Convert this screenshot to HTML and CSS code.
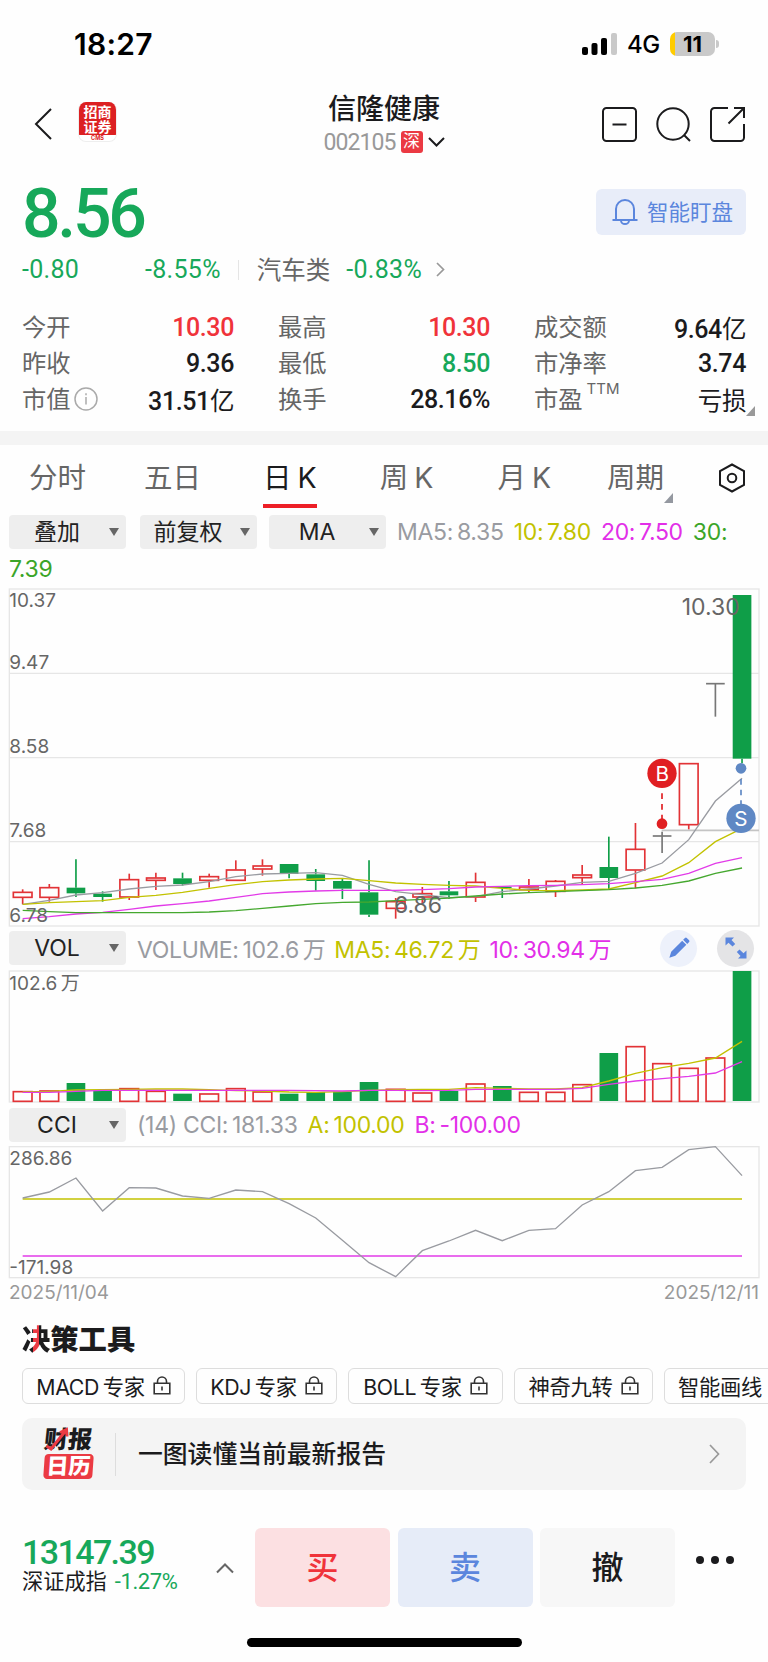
FILE: index.html
```html
<!doctype html>
<html lang="zh-CN">
<head>
  <meta charset="UTF-8">
  <title>信隆健康 002105</title>
  <link rel="stylesheet" href="styles.css">
</head>
<body>
  <div class="status">
    <span class="time">18:27</span>
    <svg class="signal" width="36" height="24" viewBox="0 0 36 24">
      <rect x="0" y="15" width="6" height="8" rx="2"/>
      <rect x="9.5" y="11" width="6" height="12" rx="2"/>
      <rect x="19" y="6" width="6" height="17" rx="2"/>
      <rect x="29" y="1" width="6" height="22" rx="2" fill="#c9c9c9"/>
    </svg>
    <span class="net">4G</span>
    <span class="battery">11</span>
    <span class="nub"></span>
  </div>

  <div class="header">
    <svg class="back" width="20" height="34" viewBox="0 0 20 34"><path d="M17 2 2 17l15 15"/></svg>
    <div class="cms"><b>招商<br>证券</b><i>CMS</i></div>
    <div class="name">
      <h1>信隆健康</h1>
      <p><span class="code">002105</span><em>深</em><svg width="17" height="10" viewBox="0 0 17 10"><path d="M1 1l7.500 7.500L16 1"/></svg></p>
    </div>
    <div class="tools">
      <svg width="36" height="36" viewBox="0 0 36 36"><rect x="1" y="1" width="33" height="33" rx="3.500"/><path d="M10.500 17.500h14"/></svg>
      <svg width="36" height="36" viewBox="0 0 36 36"><circle cx="17" cy="17" r="15.700"/><path d="M28 28l6 6"/></svg>
      <svg width="36" height="36" viewBox="0 0 36 36"><path d="M18 1H4.500A3.500 3.500 0 0 0 1 4.500v26A3.500 3.500 0 0 0 4.500 34h26a3.500 3.500 0 0 0 3.500-3.500V17M24 1h10v10M34 1 18.500 16.500"/></svg>
    </div>
  </div>

  <div class="price">
    <strong>8.56</strong>
    <a class="watch"><svg width="26" height="28" viewBox="0 0 26 28"><path d="M4 22V11a9 9 0 0 1 18 0v11M0.500 22h25M9 22.500a4 3.600 0 0 0 8 0"/></svg><span>智能盯盘</span></a>
  </div>
  <div class="change">
    <span class="c1">-0.80</span><span class="c2">-8.55%</span><i></i><span class="trade">汽车类</span><span>-0.83%</span>
    <svg width="9" height="15" viewBox="0 0 9 15"><path d="M1 1l6.500 6.500L1 14"/></svg>
  </div>
  <div class="quote">
    <div><label>今开</label><b class="red">10.30</b></div>
    <div><label>最高</label><b class="red">10.30</b></div>
    <div><label>成交额</label><b>9.64<u>亿</u></b></div>
    <div><label>昨收</label><b>9.36</b></div>
    <div><label>最低</label><b class="green">8.50</b></div>
    <div><label>市净率</label><b>3.74</b></div>
    <div><label>市值<svg width="24" height="24" viewBox="0 0 24 24"><circle cx="12" cy="12" r="11"/><path d="M12 10v7.500M12 6.200v2"/></svg></label><b>31.51<u>亿</u></b></div>
    <div><label>换手</label><b>28.16%</b></div>
    <div class="more"><label>市盈<sup>TTM</sup></label><b><u>亏损</u></b></div>
  </div>

  <div class="bar"></div>

  <div class="tabs">
    <span>分时</span><span>五日</span><span class="on">日<s>K</s></span><span>周<s>K</s></span><span>月<s>K</s></span><span class="cycle">周期</span>
    <svg width="30" height="30" viewBox="0 0 30 30"><path d="M15 1.500l12 6.500v14l-12 6.500L3 22V8z"/><circle cx="15" cy="15" r="4.300"/></svg>
  </div>

  <div class="legend">
    <span class="chip">叠加</span><span class="chip c-adj">前复权</span><span class="chip c-ma">MA</span>
    <span class="ma"><span class="gray">MA5:&thinsp;8.35</span><span class="yellow">10:&thinsp;7.80</span><span class="pink">20:&thinsp;7.50</span><span class="grn">30:</span></span>
  </div>
  <div class="legend2">7.39</div>

  <svg id="kline" class="chart" width="768" height="350" viewBox="0 0 2304 1050"></svg>

  <div class="legend vol">
    <span class="chip">VOL</span>
    <span class="ma"><span class="gray">VOLUME:&thinsp;102.6&thinsp;万</span><span class="yellow">MA5:&thinsp;46.72&thinsp;万</span><span class="pink">10:&thinsp;30.94&thinsp;万</span></span>
    <span class="round"><svg width="22" height="22" viewBox="0 0 24 24"><path d="M1.500 22.500l2-6.500L15.500 4l4.500 4.500L8 20.500zM16.500 3l2-2a1.500 1.500 0 0 1 2 0l2.500 2.500a1.500 1.500 0 0 1 0 2l-2 2z"/></svg></span>
    <span class="round dark"><svg width="22" height="22" viewBox="0 0 22 22"><path d="M0.500 0.500h8.500L6.500 3l3.700 3.900-2.700 2.600L3.500 5.800 0.500 8.500zM21.500 21.500H13l2.500-2.500-3.700-3.900 2.700-2.600 4 3.700 3-2.700z"/></svg></span>
  </div>

  <svg id="volume" class="chart" width="768" height="141" viewBox="0 138 2304 423"></svg>

  <div class="legend cci">
    <span class="chip">CCI</span>
    <span class="ma"><span class="gray">(14) CCI:&thinsp;181.33</span><span class="yellow">A:&thinsp;100.00</span><span class="pink">B:&thinsp;-100.00</span></span>
  </div>

  <svg id="cci" class="chart" width="768" height="139" viewBox="0 36 2304 417"></svg>
  <div class="dates"><span>2025/11/04</span><span>2025/12/11</span></div>

  <h2><span class="jue">决</span>策工具</h2>
  <div class="experts">
    <a>MACD&thinsp;专家<svg><use href="#lock"/></svg></a>
    <a>KDJ&thinsp;专家<svg><use href="#lock"/></svg></a>
    <a>BOLL&thinsp;专家<svg><use href="#lock"/></svg></a>
    <a>神奇九转<svg><use href="#lock"/></svg></a>
    <a>智能画线<svg><use href="#lock"/></svg></a>
  </div>

  <div class="report">
    <div class="cal">
      <b>财报</b><i>日历</i>
      <svg width="26" height="26" viewBox="0 0 26 26"><path d="M1.500 19l4.500 3L20.500 4M15 5.500l6.500-3 .5 7"/></svg>
    </div>
    <p>一图读懂当前最新报告</p>
    <svg class="go" width="11" height="20" viewBox="0 0 11 20"><path d="M1 1l8.500 9L1 19"/></svg>
  </div>

  <div class="footer">
    <div class="index">
      <strong>13147.39</strong>
      <p>深证成指<span>-1.27%</span></p>
    </div>
    <svg class="up" width="18" height="11" viewBox="0 0 18 11"><path d="M1 9.500L9 1.500l8 8"/></svg>
    <a class="buy">买</a><a class="sell">卖</a><a class="cancel">撤</a>
    <div class="dots"><i></i><i></i><i></i></div>
  </div>
  <div class="home"></div>

  <svg class="defs"><symbol id="lock" viewBox="0 0 18 19"><path d="M1.200 7.200h15.600v10.600H1.200zM4.500 7V5.500a4.500 4.500 0 0 1 9 0V7M9 10.500v4"/></symbol></svg>
  <script src="chart.js"></script>
</body>
</html>
```
FILE: styles.css
```css
*{margin:0;
  padding:0;
  box-sizing:border-box;}
body{width:768px;
     height:1662px;
     overflow:hidden;
     background:#fefefe;
     color:#1b1b1d;
     font-family:Inter,"Noto Sans CJK SC",sans-serif;}
i,em{font-style:normal;}
u,s{text-decoration:none;}
svg{display:block;
    flex:none;
    fill:none;
    stroke:#1b1b1d;
    stroke-width:2;}

/* 状态栏 */
.status{display:flex;
        align-items:center;
        height:80px;
        padding:8px 49px 0 74px;}
.time{flex:1;
      font-size:30px;
      font-weight:600;
      letter-spacing:.3px;
      color:#000;}
.signal{fill:#000; stroke:none;}
.net{margin:0 10px 0 9px;
     font-size:24px;
     font-weight:500;
     letter-spacing:-.3px;
     color:#000;}
.battery{width:45px;
         height:24px;
         border-radius:7px;
         background:linear-gradient(90deg,#fc0 5px,#c9c9c9 5px);
         color:#000;
         font-size:22px;
         font-weight:700;
         line-height:24px;
         text-align:center;}
.nub{width:3px;
     height:8px;
     margin-left:1px;
     border-radius:0 3px 3px 0;
     background:#c9c9c9;}

/* 标题 */
.header{display:flex;
        position:relative;
        height:88px;
        padding:22px 22px 0 34px;}
.back{margin-top:5px;}
.cms{width:39px;
     height:40px;
     margin-left:24px;
     border:1px solid #eee;
     border-top:0;
     border-radius:8px;
     overflow:hidden;
     background:#fff;
     text-align:center;}
.cms b{display:block;
       height:33px;
       margin:0 -1px;
       padding-top:2px;
       background:#dc2022;
       color:#fff;
       font-size:14px;
       line-height:15px;}
.cms i{display:block;
       color:#dc2022;
       font-size:5.500px;
       font-weight:700;
       line-height:6px;}
.name{flex:1;
      margin-left:49px;
      margin-top:-10px;
      text-align:center;}
.name h1{font-size:28px;
         font-weight:500;
         line-height:34px;}
.name p{display:flex;
        justify-content:center;
        align-items:center;
        height:28px;
        margin-top:2px;}
.code{color:#999;
      font:23px Roboto,sans-serif;
      letter-spacing:-.9px;}
.name em{width:22px;
         height:22px;
         margin:0 5px;
         border-radius:3px;
         background:#eb3a43;
         color:#fff;
         font-size:17px;
         line-height:21px;}
.tools{display:flex;
       gap:18px;
       margin-top:4.500px;}

/* 现价 */
.price{display:flex;
       justify-content:space-between;
       height:77px;
       padding:21px 22px 0 22px;}
.price strong{color:#17a85a;
              font:500 68px/50px Roboto,sans-serif;
              letter-spacing:-3.300px;}
.watch{display:flex;
       align-items:center;
       width:150px;
       height:46px;
       padding-left:16px;
       gap:9px;
       border-radius:6px;
       background:#e8edf9;
       color:#5b86dd;
       font-size:21.500px;
       white-space:nowrap;}
.watch span{padding-bottom:3px;}
.watch svg{stroke:#5b86dd;}
.change{display:flex;
        align-items:center;
        height:49px;
        padding-left:22px;
        color:#17a85a;
        font:25px Roboto,"Noto Sans CJK SC",sans-serif;
        letter-spacing:.3px;}
.c1{width:123px;}
.change i{width:1px;
          height:20px;
          margin:0 18px 0 17px;
          background:#e5e5e5;}
.change .trade{margin:-3px 16px 0 0;
               color:#666;
               font-size:24.500px;
               letter-spacing:0;}
.change svg{margin-left:14px;
            stroke:#999;
            stroke-width:1.700;}
.quote{display:grid;
       grid-template-columns:repeat(3,211px);
       grid-auto-rows:36px;
       column-gap:45px;
       height:137px;
       padding:15px 22px 0 23px;}
.quote div{display:flex;
           justify-content:space-between;
           align-items:center;}
.quote label{display:flex;
             align-items:center;
             margin:-3px 0 0 -1px;
             color:#666;
             font-size:24.300px;}
.quote label svg{margin:3px 0 0 3px;
                 stroke:#aaa;
                 stroke-width:1.500;}
.quote b{font:500 25px Roboto,"Noto Sans CJK SC",sans-serif;
         letter-spacing:-.4px;}
.quote u{font-weight:400;
         font-size:24.500px;}
.quote .red{color:#f0333a;}
.quote .green{color:#17a85a;}
.quote sup{margin:-18px 0 0 4px;
           font-size:15px;}
.more{position:relative;}
.more:after,.cycle:after{content:"";
                         position:absolute;
                         right:-9px;
                         bottom:1px;
                         border-bottom:10px solid #999;
                         border-left:9px solid transparent;}

.bar{height:14px;
     background:#f4f4f4;}

/* 周期切换 */
.tabs{display:flex;
      height:70px;
      padding-left:29px;
      color:#666;
      font-size:28.500px;
      line-height:65px;
      white-space:nowrap;}
.tabs span{flex:none;
           height:63px;
           margin-right:58px;}
.tabs s{margin-left:6px;}
.tabs .on{margin:0 63px 0 4px;
          border-bottom:4px solid #ed1f26;
          color:#1b1b1d;}
.tabs .on + span{margin-right:64px;}
.tabs .on + span + span{margin-right:56px;}
.tabs .cycle{position:relative;
             margin-right:53px;}
.cycle:after{bottom:5px;
             border-bottom-color:#9498a0;}
.tabs svg{margin-top:18px;}

/* 指标行 */
.legend{display:flex;
        align-items:center;
        height:34px;
        padding-left:9px;
        white-space:nowrap;}
.chip{position:relative;
      flex:none;
      width:117px;
      height:34px;
      padding-right:21px;
      border-radius:4px;
      background:#eee;
      color:#222;
      font-size:23px;
      line-height:34px;
      text-align:center;}
.chip:after{content:"";
            position:absolute;
            right:7px;
            top:13px;
            border:5px solid transparent;
            border-top:8px solid #666;
            border-bottom:0;}
.c-adj{margin:0 12px 0 14px;}
.ma{display:flex;
    flex:1;
    gap:10px;
    margin-left:11px;
    font-size:23px;
    letter-spacing:-.3px;}
.gray{color:#999ba1;}
.yellow{color:#c2c200;}
.pink{color:#e22fe8;}
.grn{color:#3ba528;}
.legend2{height:31px;
         padding-left:9px;
         color:#3ba528;
         font-size:23px;
         line-height:40px;
         letter-spacing:-.3px;}
.vol{height:36px;
     padding-right:14px;}
.vol .ma{gap:9px;
         letter-spacing:-.35px;}
.cci{height:35px;}
.round{display:flex;
       justify-content:center;
       align-items:center;
       width:37px;
       height:37px;
       margin-left:20px;
       border-radius:50%;
       background:#edf1fb;}
.round svg{fill:#5b86dd; stroke:none;}
.dark{background:#e4e4e6;}
.chart text{stroke:none;
            fill:#666;
            font-size:57px;}
.chart .big{font-size:69px;}
.chart .mark{fill:#fff;
             font-size:62px;
             text-anchor:middle;}
.dates{display:flex;
       justify-content:space-between;
       height:41px;
       padding:0 9px;
       color:#999;
       font-size:19px;
       line-height:24px;}

/* 决策工具 */
h2{height:46px;
   padding-left:22px;
   font-size:28.300px;
   font-weight:900;
   line-height:37px;}
.jue{background:linear-gradient(90deg,#1b1b1d 11px,#eb3a43 11px,#eb3a43 17px,#1b1b1d 17px);
     -webkit-background-clip:text;
     background-clip:text;
     color:transparent;}
.experts{display:flex;
         gap:11px;
         height:50px;
         padding-left:22px;
         overflow:hidden;}
.experts a{display:flex;
           flex:none;
           align-items:center;
           justify-content:center;
           gap:8px;
           width:163px;
           height:36px;
           padding-bottom:2px;
           border:1.500px solid #ddd;
           border-radius:6px;
           font-size:21.300px;
           letter-spacing:-.3px;
           white-space:nowrap;}
.experts a:nth-child(2){width:141px;}
.experts a:nth-child(3){width:155px;}
.experts a:nth-child(4){width:139px;}
.experts a:nth-child(5){justify-content:flex-start; padding-left:13px;}
.experts svg{width:18px;
             height:19px;
             stroke:#333;
             stroke-width:1.600;}
.report{display:flex;
        align-items:center;
        height:72px;
        margin:0 22px;
        padding:0 26px 0 22px;
        border-radius:10px;
        background:#f4f4f4;}
.cal{position:relative;
     width:49px;
     height:50px;}
.cal b{display:block;
       height:25px;
       font-size:24px;
       font-weight:900;
       line-height:22px;
       transform:skewX(-6deg);}
.cal i{display:block;
       height:25px;
       border-radius:4px;
       background:#eb3a43;
       color:#fff;
       font-size:22px;
       font-weight:900;
       line-height:24px;
       text-align:center;
       transform:skewX(-4deg);}
.cal svg{position:absolute;
         left:1px;
         top:-2px;
         stroke:#eb3a43;
         stroke-width:3;}
.report p{flex:1;
          height:43px;
          margin-left:22px;
          padding-left:22px;
          border-left:1px solid #ddd;
          font-size:24.800px;
          font-weight:500;
          line-height:42px;}
.go{stroke:#999;
    stroke-width:1.700;}

/* 底部 */
.footer{display:flex;
        height:110px;
        padding:0 22px;
        margin-top:38px;}
.index{width:194px;
       padding-top:9px;}
.index strong{display:block;
              height:31px;
              color:#17a85a;
              font:500 34px/30px Roboto,sans-serif;
              letter-spacing:-1.600px;}
.index p{font-size:21.200px;
         line-height:26px;
         white-space:nowrap;}
.index span{margin-left:8px;
            color:#17a85a;
            font:22px Roboto,sans-serif;
            letter-spacing:-.4px;}
.up{margin:35px 21px 0 0;
    stroke:#666;}
.footer a{width:135px;
          height:79px;
          margin-right:7.500px;
          border-radius:6px;
          font-size:32px;
          font-weight:500;
          line-height:80px;
          text-align:center;}
.footer .buy{background:#fce0e2; color:#f0333a;}
.footer .sell{background:#e6ecf8; color:#5b86dd;}
.footer .cancel{background:#f7f7f7;}
.dots{display:flex;
      gap:7px;
      margin:28px 0 0 13px;}
.dots i{width:8px;
        height:8px;
        border-radius:50%;
        background:#1b1b1d;}
.home{width:275px;
      height:9px;
      margin:0 0 0 247px;
      border-radius:5px;
      background:#000;}
.defs{position:absolute; width:0; height:0;}
```
FILE: chart.js
```js
var RED='#e23336', GREEN='#0f9e48', GRAY='#999ba1', YELLOW='#c2c200', PINK='#e23be8', GRN='#45a82f';
/* 第i根K线的中心 */
function cx(i){
  return 68+i*79.93;
}
function line(x1,y1,x2,y2,color,w,more){
  return '<line x1="'+x1+'" y1="'+y1+'" x2="'+x2+'" y2="'+y2+'" stroke="'+color+'" stroke-width="'+w+'" '+(more||'')+'/>';
}
function box(i,top,bottom,up){
  var x=cx(i);
  if(up){
    return '<rect x="'+(x-28)+'" y="'+(top+1)+'" width="56" height="'+Math.max(bottom-top-2,2)+'" stroke="'+RED+'" stroke-width="5"/>';
  }
  return '<rect x="'+(x-28)+'" y="'+top+'" width="56" height="'+(bottom-top)+'" fill="'+GREEN+'" stroke="none"/>';
}
function curve(data,color){
  var p=[];
  for(var i=0;i<data.length;i++){
    p.push(cx(i)+','+data[i]);
  }
  return '<polyline points="'+p.join(' ')+'" stroke="'+color+'" stroke-width="4"/>';
}
function frame(top,bottom){
  return '<rect x="28" y="'+top+'" width="2249" height="'+(bottom-top)+'" stroke="#e6e6e6" stroke-width="4"/>';
}
function text(x,y,s,cls){
  return '<text x="'+x+'" y="'+y+'" class="'+(cls||'')+'">'+s+'</text>';
}

/* 日K: 类型,最高,实体上,实体下,最低 */
var k=[['r',928,936,953,973],['r',912,922,953,965],['g',838,923,940,951],['g',934,941,951,965],
  ['r',881,898,952,960],['r',878,893,902,930],['g',878,895,912,917],['r',881,889,902,923],
  ['r',841,869,902,902],['r',838,857,868,887],['g',852,852,882,895],['g',867,883,903,932],
  ['g',896,903,926,957],['g',841,937,1004,1011],['r',954,964,986,1016],['r',921,940,952,970],
  ['g',903,934,946,956],['r',878,906,952,966],['g',920,920,924,954],['r',897,920,930,938],
  ['r',900,903,935,951],['r',855,884,894,912],['g',770,861,894,927],['r',729,807,871,925],
  ['n',755,767,770,819],['r',550,550,735,748],['n',310,310,312,410],['g',45,45,536,550]];
var h=frame(27,1038);
[280,533,785].forEach(function(y){
  h+=line(28,y,2277,y,'#e6e6e6',4);
});
h+=line(1985,751,2277,751,'#c4c4c4',5);
for(var i=0;i<k.length;i++){
  var c=k[i], x=cx(i);
  if(c[0]=='n'){
    h+=line(x,c[1],x,c[4],'#777',5)+line(x-28,c[2]+1,x+28,c[2]+1,'#777',5);
    continue;
  }
  var color=c[0]=='r'?RED:GREEN;
  h+=line(x,c[1],x,c[2],color,5)+line(x,c[3],x,c[4],color,5)+box(i,c[2],c[3],c[0]=='r');
}
h+=curve([973,961,945,938,927,919,915,905,890,882,880,878,886,913,935,944,953,950,935,927,918,907,904,880,849,779,663,595],GRAY);
h+=curve([973,968,965,962,952,946,937,925,914,905,900,897,895,902,909,913,916,918,925,931,932,930,927,908,888,848,785,745],YELLOW);
h+=curve([1016,1010,1002,997,988,978,971,963,952,941,936,933,931,931,931,929,926,921,919,917,916,914,911,905,898,880,850,833],PINK);
h+=curve([991,995,998,998,998,998,998,996,992,985,978,971,967,966,962,958,954,948,942,938,935,932,929,924,916,903,880,864],GRN);
/* 坐标和买卖点 */
h+=text(28,82,'10.37')+text(28,266,'9.47')+text(28,519,'8.58')+text(28,772,'7.68')+text(28,1026,'6.78');
h+=text(2045,105,'10.30','big')+text(1182,998,'6.86','big');
h+=line(1986,640,1986,720,'#e01f22',5,'stroke-dasharray="17 15"');
h+='<circle cx="1986" cy="731" r="16" fill="#e01f22" stroke="none"/><circle cx="1986" cy="580" r="44" fill="#e01f22" stroke="none"/>'+text(1987,604,'B','mark');
h+=line(2223,597,2223,680,'#5f88c4',5,'stroke-dasharray="17 15"');
h+='<circle cx="2223" cy="565" r="16" fill="#5f88c4" stroke="none"/><circle cx="2223" cy="715" r="44" fill="#5f88c4" stroke="none"/>'+text(2223,737,'S','mark');
document.getElementById('kline').innerHTML=h;

/* 成交量 */
var v=[514,512,489,513,505,513,521,521,505,515,521,516,515,486,507,518,513,491,498,516,516,493,399,379,430,444,413,153];
var t='rrggrrgrrrggggrrgrgrrrgrrrrg';
h=frame(153,546);
for(i=0;i<v.length;i++){
  h+=box(i,v[i],t[i]=='r'?545:543,t[i]=='r');
}
h+=curve([516,514,510,509,508,507,507,509,512,513,516,517,515,511,509,508,508,503,505,507,507,503,483,460,443,430,414,364],YELLOW);
h+=curve([517,517,514,511,511,511,511,511,511,511,511,512,513,511,511,512,511,508,508,508,508,505,493,483,476,469,459,425],PINK);
h+=text(28,209,'102.6&#8201;万');
document.getElementById('volume').innerHTML=h;

/* CCI */
h=frame(50,443);
h+=line(68,207,2226,207,YELLOW,4.500)+line(68,378,2226,378,PINK,4.500);
h+=curve([204,186,144,243,173,174,198,205,180,185,221,264,331,398,440,362,333,301,332,301,296,225,185,122,112,59,50,137],GRAY);
h+=text(28,106,'286.86')+text(28,431,'-171.98');
document.getElementById('cci').innerHTML=h;
```
